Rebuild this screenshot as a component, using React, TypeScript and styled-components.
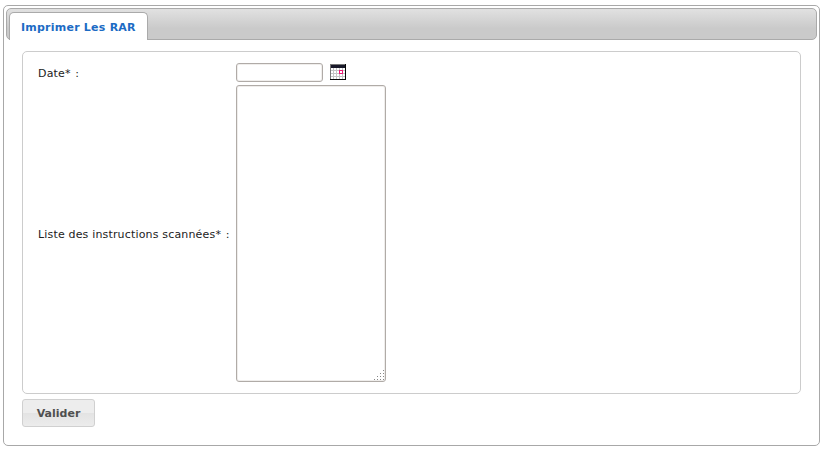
import React from 'react';
import styled, { createGlobalStyle } from 'styled-components';

const GlobalStyle = createGlobalStyle`
  * { box-sizing: border-box; }
  body {
    margin: 0;
    background: #fff;
    color: #222;
    font: 11px/13px "DejaVu Sans", Verdana, sans-serif;
  }
`;

const TabPanel = styled.main`
  margin: 5px 4px 0 3px;
  height: 441px;
  padding: 2px;
  border: 1px solid #a8a8a8;
  border-radius: 5px;
  background: #fff;
`;

const TabBar = styled.nav`
  display: flex;
  height: 32px;
  padding: 3px 2px 0;
  border: 1px solid #aaa;
  border-radius: 5px;
  background: linear-gradient(#e1e1e1, #cacaca 65%, #cacaca);
`;

const Tab = styled.a`
  width: 139px;
  height: 28px;
  margin-bottom: -1px;
  padding: 8px 0 0 11px;
  border: 1px solid #aaa;
  border-bottom: 0;
  border-radius: 5px 5px 0 0;
  background: #fff;
  color: #1c6bc4;
  font-weight: bold;
  letter-spacing: 0.23px;
  white-space: nowrap;
`;

const Form = styled.form`
  padding: 11px 16px 0;
`;

const Fields = styled.section`
  display: grid;
  grid-template-columns: 198px auto;
  grid-template-rows: 19px 297px;
  row-gap: 3px;
  height: 343px;
  padding: 11px 15px;
  border: 1px solid #ccc;
  border-radius: 5px;
  align-items: center;
`;

const Label = styled.label`
  padding-top: 2px;
  letter-spacing: 0.17px;
  white-space: nowrap;
`;

const Colon = styled.span`
  margin-left: 1px;
`;

const DateField = styled.div`
  display: flex;
  align-items: flex-start;
  gap: 7px;
`;

const TextInput = styled.input`
  width: 87px;
  height: 19px;
  padding: 2px;
  border: 1px solid #b0aba7;
  border-radius: 3px;
  box-shadow: inset 0 0 0 1px #f0eeec;
  outline: 0;
  font: inherit;
`;

const CalendarImage = styled.svg`
  margin-top: 1px;
`;

const ListBox = styled.div`
  position: relative;
  width: 150px;
  height: 297px;
`;

const TextArea = styled.textarea`
  display: block;
  width: 100%;
  height: 100%;
  padding: 2px;
  border: 1px solid #b0aba7;
  border-radius: 3px;
  box-shadow: inset 0 0 0 1px #efedeb;
  outline: 0;
  resize: none;
  font: inherit;
`;

const Grip = styled.svg`
  position: absolute;
  right: 2px;
  bottom: 2px;
`;

const Submit = styled.button`
  display: block;
  width: 73px;
  height: 28px;
  margin-top: 5px;
  padding: 0;
  border: 1px solid #d0d0d0;
  border-radius: 3px;
  background: linear-gradient(#ededed 0 50%, #e3e3e3 50%, #ececec);
  color: #4f4f4f;
  font: bold 11px/13px "DejaVu Sans", Verdana, sans-serif;
`;

const CalendarIcon = () => (
  <CalendarImage width="16" height="16" shapeRendering="crispEdges" aria-label="Calendrier">
    <rect width="16" height="16" fill="#c5c5c5" />
    {[4, 7, 10, 13].map((y) =>
      [1, 4, 7, 10, 13].map((x) => (
        <rect key={`${x}-${y}`} x={x} y={y} width="2" height="2" fill="#fff" />
      )),
    )}
    <path d="M0 0H16V1H1V16H0Z" fill="#777" />
    <rect x="1" y="1" width="14" height="3" fill="#18192a" />
    <path d="M15 0H16V16H0V15H15Z" fill="#080808" />
    <path d="M9 6H13V10H9Z" fill="#ed1976" />
    <path d="M10 7H12V9H10Z" fill="#fff" />
  </CalendarImage>
);

const gripDots = [[9, 0], [6, 3], [9, 3], [3, 6], [6, 6], [9, 6], [0, 9], [3, 9], [6, 9], [9, 9]];

export default function App() {
  return (
    <>
      <GlobalStyle />
      <TabPanel>
        <TabBar><Tab>Imprimer Les RAR</Tab></TabBar>
        <Form>
          <Fields>
            <Label htmlFor="date">Date* <Colon>:</Colon></Label>
            <DateField>
              <TextInput id="date" />
              <CalendarIcon />
            </DateField>
            <Label htmlFor="instructions">Liste des instructions scannées* <Colon>:</Colon></Label>
            <ListBox>
              <TextArea id="instructions" />
              <Grip width="10" height="10" shapeRendering="crispEdges">
                {gripDots.map(([x, y]) => (
                  <rect key={`${x}-${y}`} x={x} y={y} width="1" height="1" fill="#888" />
                ))}
              </Grip>
            </ListBox>
          </Fields>
          <Submit type="button">Valider</Submit>
        </Form>
      </TabPanel>
    </>
  );
}
